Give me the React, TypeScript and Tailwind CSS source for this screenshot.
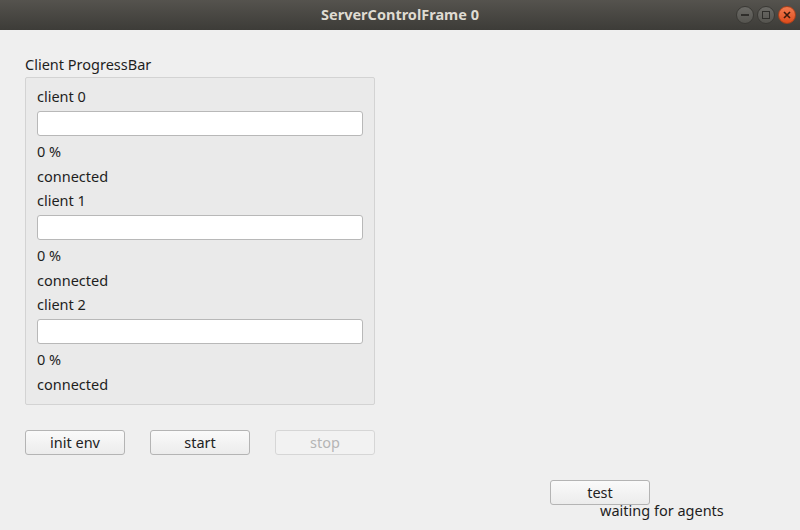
import React from "react";

const font = { fontFamily: '"Noto Sans", "Open Sans", sans-serif' };

function Btn({ label, disabled }: { label: string; disabled?: boolean }) {
  return (
    <div
      className={`w-[100px] h-[25px] flex items-center justify-center rounded-[3px] border text-[14.5px] ${
        disabled
          ? "border-[#d6d6d6] bg-[#f2f2f2] text-[#b5b5b5]"
          : "border-[#b4b4b4] bg-gradient-to-b from-[#fafafa] to-[#ececec] text-[#222]"
      }`}
    >
      {label}
    </div>
  );
}

function Client({ n }: { n: number }) {
  return (
    <div className="flex flex-col">
      <div className="h-[24px] flex items-center">client {n}</div>
      <div className="mt-[2px] h-[25px] w-[326px] rounded-[3px] border border-[#b8b8b8] bg-white" />
      <div className="mt-[4px] h-[24px] flex items-center">0 %</div>
      <div className="h-[25px] flex items-center">connected</div>
    </div>
  );
}

export default function App() {
  return (
    <div className="w-[800px] h-[530px] bg-[#efefef] flex flex-col text-[#1e1e1e] text-[14.5px]" style={font}>
      <div className="h-[30px] flex items-center bg-gradient-to-b from-[#55534e] to-[#3d3c38]">
        <div className="w-[80px]" />
        <div className="flex-1 text-center font-bold text-[14.5px] text-[#dfdbd2]">ServerControlFrame 0</div>
        <div className="w-[80px] flex items-center justify-end gap-[3px] pr-[4px]">
          <div className="w-[18px] h-[18px] rounded-full bg-gradient-to-b from-[#6b6a66] to-[#55544f] border border-[#3a3935] flex items-center justify-center">
            <div className="w-[8px] h-[2px] bg-[#2f2e2b]" />
          </div>
          <div className="w-[18px] h-[18px] rounded-full bg-gradient-to-b from-[#6b6a66] to-[#55544f] border border-[#3a3935] flex items-center justify-center">
            <div className="w-[8px] h-[8px] border-[1.5px] border-[#2f2e2b]" />
          </div>
          <div className="w-[18px] h-[18px] rounded-full bg-gradient-to-b from-[#f07a4e] to-[#df4b19] border border-[#a8401b] flex items-center justify-center">
            <svg width="8" height="8" viewBox="0 0 8 8">
              <path d="M1 1L7 7M7 1L1 7" stroke="#3a1a0c" strokeWidth="1.6" />
            </svg>
          </div>
        </div>
      </div>
      <div className="flex flex-col pl-[25px] pt-[23px]">
        <div className="h-[24px] flex items-center">Client ProgressBar</div>
        <div className="w-[350px] border border-[#d3d3d3] rounded-[2px] bg-[#eaeaea] pl-[11px] pt-[7px] pb-[7px] flex flex-col">
          <Client n={0} />
          <Client n={1} />
          <Client n={2} />
        </div>
        <div className="mt-[25px] flex gap-[25px]">
          <Btn label="init env" />
          <Btn label="start" />
          <Btn label="stop" disabled />
        </div>
        <div className="mt-[25px] pl-[525px] flex flex-col">
          <Btn label="test" />
          <div className="pl-[50px] h-[12px] flex items-center">waiting for agents</div>
        </div>
      </div>
    </div>
  );
}
